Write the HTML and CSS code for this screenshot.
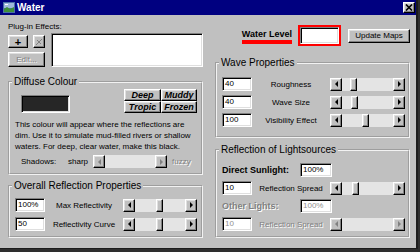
FILE: index.html
```html
<!DOCTYPE html>
<html lang="en">
<head>
  <meta charset="UTF-8">
  <title>Water</title>
  <link rel="stylesheet" href="styles.css">
</head>
<body>

<div class="window">

  <!-- title bar -->
  <div class="titlebar">
    <svg class="app-icon" viewBox="0 0 12 11">
      <rect x="0" y="0" width="12" height="11" fill="#4a6fa8"/>
      <rect x="1" y="1" width="10" height="5" fill="#9db8dc"/>
      <path d="M1 7 L4 5 L7 7 L11 5 L11 10 L1 10 Z" fill="#3f8f3a"/>
      <rect x="2" y="2" width="3" height="1" fill="#fff"/>
    </svg>
    <span class="title">Water</span>
    <button class="close">
      <svg viewBox="0 0 8 7"><path d="M1 0.5 L7 6.5 M7 0.5 L1 6.5" stroke="#000" stroke-width="1.6"/></svg>
    </button>
  </div>

  <div class="content">

    <!-- left column -->
    <div class="col-left">
      <div class="plugin-label">Plug-in Effects:</div>
      <div class="plugins">
        <div class="plugin-buttons">
          <div class="plugin-row">
            <button class="btn btn-add">+</button>
            <button class="btn btn-remove" disabled>
              <svg viewBox="0 0 8 8"><path d="M1 7 L7 1 M2 2 L6 6" stroke="#808080" stroke-width="1"/></svg>
            </button>
          </div>
          <button class="btn btn-edit" disabled>Edit...</button>
        </div>
        <div class="list"></div>
      </div>

      <fieldset class="group group-diffuse">
        <legend>Diffuse Colour</legend>
        <div class="diffuse-top">
          <div class="swatch"></div>
          <div class="presets">
            <button class="btn preset">Deep</button>
            <button class="btn preset">Muddy</button>
            <button class="btn preset">Tropic</button>
            <button class="btn preset">Frozen</button>
          </div>
        </div>
        <p class="note">This colour will appear where the reflections are<br>dim. Use it to simulate mud-filled rivers or shallow<br>waters. For deep, clear water, make this black.</p>
        <div class="shadows">
          <span class="shadows-label">Shadows:</span>
          <span class="shadows-sharp">sharp</span>
          <div class="scroll scroll-shadows disabled">
            <span class="arrow arrow-left"></span>
            <div class="track"></div>
            <span class="arrow arrow-right"></span>
          </div>
          <span class="dim">fuzzy</span>
        </div>
      </fieldset>

      <fieldset class="group group-overall">
        <legend>Overall Reflection Properties</legend>
        <div class="rows">
          <div class="row">
            <div class="field">100%</div>
            <span class="row-label">Max Reflectivity</span>
            <div class="scroll">
              <span class="arrow arrow-left"></span>
              <div class="track"><span class="thumb" style="margin-left: 42%"></span></div>
              <span class="arrow arrow-right"></span>
            </div>
          </div>
          <div class="row">
            <div class="field">50</div>
            <span class="row-label">Reflectivity Curve</span>
            <div class="scroll">
              <span class="arrow arrow-left"></span>
              <div class="track"><span class="thumb" style="margin-left: 42%"></span></div>
              <span class="arrow arrow-right"></span>
            </div>
          </div>
        </div>
      </fieldset>
    </div>

    <!-- right column -->
    <div class="col-right">
      <div class="water-row">
        <span class="water-label">Water Level</span>
        <div class="water-box"><div class="field water-field"></div></div>
        <button class="btn btn-update">Update Maps</button>
      </div>

      <fieldset class="group group-wave">
        <legend>Wave Properties</legend>
        <div class="rows">
          <div class="row">
            <div class="field">40</div>
            <span class="row-label">Roughness</span>
            <div class="scroll">
              <span class="arrow arrow-left"></span>
              <div class="track"><span class="thumb" style="margin-left: 15%"></span></div>
              <span class="arrow arrow-right"></span>
            </div>
          </div>
          <div class="row">
            <div class="field">40</div>
            <span class="row-label">Wave Size</span>
            <div class="scroll">
              <span class="arrow arrow-left"></span>
              <div class="track"><span class="thumb" style="margin-left: 17%"></span></div>
              <span class="arrow arrow-right"></span>
            </div>
          </div>
          <div class="row">
            <div class="field">100</div>
            <span class="row-label">Visibility Effect</span>
            <div class="scroll">
              <span class="arrow arrow-left"></span>
              <div class="track"><span class="thumb" style="margin-left: 40%"></span></div>
              <span class="arrow arrow-right"></span>
            </div>
          </div>
        </div>
      </fieldset>

      <fieldset class="group group-lights">
        <legend>Reflection of Lightsources</legend>
        <div class="rows">
          <div class="light-row">
            <span class="light-label">Direct Sunlight:</span>
            <div class="field field-pct">100%</div>
          </div>
          <div class="row">
            <div class="field">10</div>
            <span class="row-label">Reflection Spread</span>
            <div class="scroll">
              <span class="arrow arrow-left"></span>
              <div class="track"><span class="thumb" style="margin-left: 19%"></span></div>
              <span class="arrow arrow-right"></span>
            </div>
          </div>
          <div class="light-row">
            <span class="light-label dim">Other Lights:</span>
            <div class="field field-pct dim-field">100%</div>
          </div>
          <div class="row">
            <div class="field dim-field">10</div>
            <span class="row-label dim">Reflection Spread</span>
            <div class="scroll disabled">
              <span class="arrow arrow-left"></span>
              <div class="track"></div>
              <span class="arrow arrow-right"></span>
            </div>
          </div>
        </div>
      </fieldset>
    </div>

  </div>
</div>

</body>
</html>
```

FILE: styles.css
```css
* {
  box-sizing: border-box;
}

body {
  margin: 0;
  background-color: #2e2e2e;
  font-family: "Liberation Sans", Arial, sans-serif;
  font-size: 8px;
  color: #000;
}

.window {
  width: 418px;
  height: 249px;
  background-color: #c0c0c0;
  border-right: 2px solid #1c1c1c;
  border-bottom: 1px solid #1c1c1c;
}

/* title bar */
.titlebar {
  height: 15px;
  display: flex;
  align-items: center;
  padding: 0 1px 0 3px;
  background-color: #000080;
}

.app-icon {
  width: 12px;
  height: 11px;
}

.title {
  flex: 1;
  margin-left: 2px;
  color: #fff;
  font-size: 10px;
  font-weight: bold;
}

/* raised button look */
.btn,
.close,
.arrow,
.thumb {
  background-color: #c0c0c0;
  border: 1px solid;
  border-color: #fff #000 #000 #fff;
  box-shadow: inset -1px -1px 0 #808080, inset 1px 1px 0 #dfdfdf;
}

.btn,
.close {
  margin: 0;
  padding: 0;
  font-family: inherit;
  font-size: 8px;
  color: #000;
  display: flex;
  align-items: center;
  justify-content: center;
}

.btn:disabled {
  color: #808080;
  text-shadow: 1px 1px 0 #fff;
}

.close {
  width: 12px;
  height: 11px;
}

.close svg {
  width: 8px;
  height: 7px;
}

.content {
  display: flex;
  gap: 12px;
  padding: 0 6px 0 8px;
}

.col-left {
  width: 195px;
}

.col-right {
  width: 195px;
}

/* plug-in effects */
.plugin-label {
  margin-top: 7px;
  line-height: 10px;
}

.plugins {
  display: flex;
  gap: 6px;
  margin-top: 1px;
}

.plugin-buttons {
  width: 37px;
  padding-top: 2px;
  display: flex;
  flex-direction: column;
  gap: 4px;
}

.plugin-row {
  display: flex;
  gap: 5px;
}

.btn-add {
  width: 20px;
  height: 13px;
  font-size: 11px;
  font-weight: bold;
}

.btn-remove {
  width: 12px;
  height: 13px;
}

.btn-remove svg {
  width: 8px;
  height: 8px;
}

.btn-edit {
  width: 37px;
  height: 15px;
}

.list,
.field,
.swatch {
  border: 1px solid;
  border-color: #808080 #fff #fff #808080;
  box-shadow: inset 1px 1px 0 #000, inset -1px -1px 0 #dfdfdf;
}

.list {
  flex: 1;
  height: 34px;
  background-color: #fff;
}

/* group boxes */
.group {
  margin: 0;
  min-width: 0;
  border: 2px groove #f2f2f2;
}

.group legend {
  font-size: 10px;
  line-height: 12px;
  padding: 0 2px;
  margin-left: -3px;
}

.group-diffuse {
  margin-top: 9px;
  padding: 1px 4px 5px 5px;
}

.group-overall {
  margin-top: 5px;
  padding: 6px 4px 5px 5px;
}

.group-overall .rows {
  gap: 5px;
}

.group-wave {
  margin-top: 11px;
  padding: 8px 3px 9px 5px;
}

.group-lights {
  margin-top: 6px;
  padding: 7px 3px 5px 5px;
}

.rows {
  display: flex;
  flex-direction: column;
  gap: 4px;
}

.row {
  display: grid;
  grid-template-columns: 30px 1fr 75px;
  align-items: center;
  height: 14px;
}

.group-overall .row {
  grid-template-columns: 30px 1fr 74px;
}

.row-label {
  text-align: center;
  white-space: nowrap;
}

.field {
  height: 14px;
  padding: 0 2px;
  line-height: 12px;
  background-color: #fff;
}

.dim {
  color: #808080;
  text-shadow: 1px 1px 0 #fff;
}

.dim-field {
  color: #909090;
}

/* diffuse colour */
.diffuse-top {
  display: flex;
  justify-content: space-between;
}

.swatch {
  width: 49px;
  height: 18px;
  margin-top: 6px;
  margin-left: 6px;
  background-color: #262626;
}

.presets {
  display: grid;
  grid-template-columns: 37px 36px;
  grid-template-rows: 12px 12px;
}

.preset {
  font-size: 9px;
  font-weight: bold;
  font-style: italic;
}

.note {
  margin: 6px 0 0;
  line-height: 11px;
  white-space: nowrap;
}

.shadows {
  display: flex;
  align-items: center;
  margin-top: 3px;
  padding-left: 6px;
}

.shadows-label {
  width: 47px;
}

.shadows-sharp {
  width: 25px;
}

.scroll-shadows {
  width: 74px;
  margin-right: 5px;
}

/* scroll bars */
.scroll {
  display: flex;
  height: 13px;
}

.track {
  flex: 1;
  display: flex;
  background-color: #e4e4e4;
}

.thumb {
  width: 7px;
  height: 13px;
}

.arrow {
  width: 12px;
  height: 13px;
  display: flex;
  align-items: center;
  justify-content: center;
}

.arrow::before {
  content: "";
  width: 0;
  height: 0;
  border-top: 3px solid transparent;
  border-bottom: 3px solid transparent;
}

.arrow-left::before {
  border-right: 3px solid #000;
}

.arrow-right::before {
  border-left: 3px solid #000;
}

.disabled .arrow-left::before {
  border-right-color: #808080;
}

.disabled .arrow-right::before {
  border-left-color: #808080;
}

/* water level */
.water-row {
  display: flex;
  justify-content: flex-end;
  align-items: center;
  height: 21px;
  margin-top: 10px;
}

.water-label {
  align-self: flex-end;
  margin-bottom: 2px;
  margin-right: 6px;
  padding-bottom: 1px;
  font-size: 9px;
  font-weight: bold;
  line-height: 10px;
  border-bottom: 4px solid #ff0000;
}

.water-box {
  width: 43px;
  height: 21px;
  border: 2px solid #ff0000;
}

.water-field {
  height: 17px;
}

.btn-update {
  width: 62px;
  height: 14px;
  margin-left: 7px;
}

/* light sources */
.light-row {
  display: flex;
  align-items: center;
  height: 14px;
}

.light-label {
  width: 78px;
  font-size: 9px;
  font-weight: bold;
}

.field-pct {
  width: 32px;
}
```
